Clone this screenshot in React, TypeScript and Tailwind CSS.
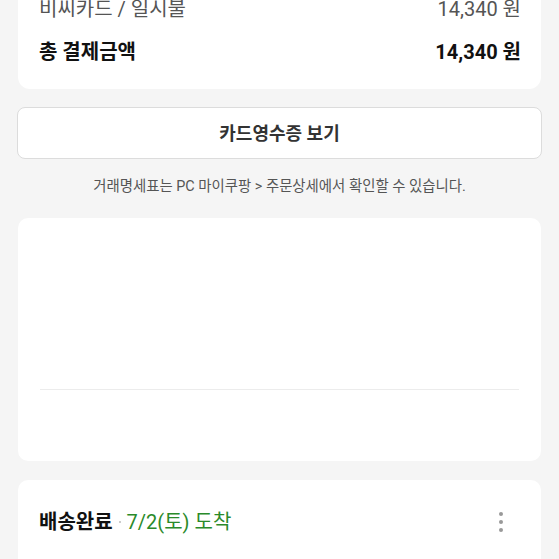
import React from "react";

export default function App() {
  const font = { fontFamily: '"Roboto", "Noto Sans CJK KR", sans-serif' };
  return (
    <div className="w-[559px] h-[559px] overflow-hidden bg-[#f5f5f5]" style={font}>
      <div className="ml-[18px] mr-[18px] -mt-[20px] h-[109px] rounded-b-[12px] bg-white pl-[21px] pr-[20px] pt-[13px]">
        <div className="flex justify-between items-center h-[32px] text-[20px] text-[#555]">
          <span>비씨카드 / 일시불</span>
          <span>14,340 원</span>
        </div>
        <div className="flex justify-between items-center mt-[12px] h-[30px] text-[20px] font-bold text-[#111]">
          <span>총 결제금액</span>
          <span>14,340 원</span>
        </div>
      </div>
      <div className="mx-[17px] mt-[18px] h-[52px] rounded-[8px] border border-[#dcdcdc] bg-white flex items-center justify-center text-[18px] font-bold text-[#333]">
        카드영수증 보기
      </div>
      <div className="mt-[18px] text-center text-[14.4px] text-[#555] h-[20px] leading-[20px]">
        거래명세표는 PC 마이쿠팡 &gt; 주문상세에서 확인할 수 있습니다.
      </div>
      <div className="mx-[18px] mt-[21px] h-[243px] rounded-[10px] bg-white px-[22px]">
        <div className="h-[171px]"></div>
        <div className="h-px bg-[#ececec]"></div>
      </div>
      <div className="mx-[18px] mt-[19px] h-[100px] rounded-[10px] bg-white pl-[21px] pr-[22px] pt-[28px]">
        <div className="flex items-center justify-between h-[28px]">
          <div className="flex items-center text-[20px]">
            <span className="font-bold text-[#111]">배송완료</span>
            <span className="mx-[6px] w-[2px] h-[2px] rounded-full bg-[#bbb]"></span>
            <span className="text-[#2a8a2a]">7/2(토) 도착</span>
          </div>
          <div className="flex flex-col gap-[4px] mr-[16px]">
            <span className="w-[4px] h-[4px] rounded-full bg-[#999]"></span>
            <span className="w-[4px] h-[4px] rounded-full bg-[#999]"></span>
            <span className="w-[4px] h-[4px] rounded-full bg-[#999]"></span>
          </div>
        </div>
      </div>
    </div>
  );
}
